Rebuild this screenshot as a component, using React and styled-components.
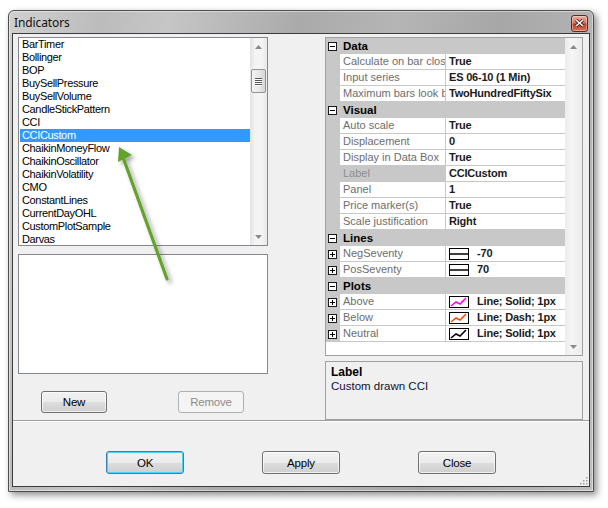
import styled, { createGlobalStyle, css } from 'styled-components';

const Global = createGlobalStyle`
  html, body { margin: 0; padding: 0; background: #fff; }
  body { font-family: "Liberation Sans", Arial, sans-serif; font-size: 11px; color: #000; }
  * { box-sizing: border-box; }
`;

const Page = styled.div`
  position: relative;
  width: 608px;
  height: 508px;
  padding: 10px 0 0 8px;
`;

const Frame = styled.div`
  width: 586px;
  border: 1px solid #4e4e4e;
  border-radius: 6px 6px 0 0;
  padding: 0 3px 4px 3px;
  background: linear-gradient(100deg, #d0d0d0 0%, #bcbcbc 14%, #c6c6c6 24%, #aaaaaa 44%, #b5b5b5 58%, #a7a7a7 74%, #bebebe 100%);
  box-shadow: 3px 3px 7px rgba(0, 0, 0, 0.45), inset 0 0 0 1px rgba(255, 255, 255, 0.45);
`;

const TitleBar = styled.div`
  height: 22px;
  display: flex;
  align-items: center;
  padding-left: 2px;
`;

const Title = styled.span`
  font-family: "Noto Sans", "Open Sans", sans-serif;
  font-size: 12px;
  color: #111;
  letter-spacing: -0.1px;
`;

const CloseBtn = styled.div`
  margin-left: auto;
  margin-right: 2px;
  width: 17px;
  height: 17px;
  margin-top: 2px;
  border: 1px solid #5c2a1f;
  border-radius: 3px;
  background: linear-gradient(#eab1a2 0%, #d9725a 45%, #c5391f 55%, #d7745c 100%);
  box-shadow: inset 0 0 0 1px rgba(255, 255, 255, 0.35);
  display: flex;
  align-items: center;
  justify-content: center;
`;

const Client = styled.div`
  height: 454px;
  border: 1px solid #3c3c3c;
  background: #f0f0f0;
  display: flex;
  flex-direction: column;
`;

const TopArea = styled.div`
  height: 387px;
  display: flex;
  gap: 57px;
  padding: 3px 6px 0 5px;
  border-bottom: 1px solid #a0a0a0;
  box-shadow: 0 1px 0 #fff;
`;

const LeftCol = styled.div`
  width: 250px;
  display: flex;
  flex-direction: column;
`;

const ListBox = styled.div`
  height: 209px;
  border: 1px solid #828790;
  background: #fff;
  display: flex;
`;

const ListItems = styled.div`
  flex: 1;
  padding-top: 0;
  overflow: hidden;
`;

const ListItem = styled.div`
  height: 13px;
  line-height: 13px;
  margin-left: 1px;
  padding-left: 2px;
  white-space: nowrap;
  letter-spacing: -0.35px;
  ${(p) => p.$selected && css`
    background: #3399ff;
    color: #fff;
  `}
`;

const ScrollBar = styled.div`
  width: 17px;
  background: linear-gradient(90deg, #e3e3e3, #f4f4f4 30%, #f4f4f4 70%, #e8e8e8);
  display: flex;
  flex-direction: column;
  align-items: center;
  position: relative;
`;

const ScrollArrow = styled.div`
  height: 17px;
  width: 17px;
  display: flex;
  align-items: center;
  justify-content: center;
`;

const Track = styled.div`
  flex: 1;
  width: 100%;
  display: flex;
  flex-direction: column;
  align-items: center;
`;

const Thumb = styled.div`
  margin-top: ${(p) => p.$offset}px;
  width: 15px;
  height: 24px;
  border: 1px solid #959595;
  border-radius: 2px;
  background: linear-gradient(90deg, #f3f3f3, #e8e8e8 50%, #d6d6d6);
  display: flex;
  flex-direction: column;
  align-items: center;
  justify-content: center;
  gap: 1px;
`;

const GripLine = styled.div`
  width: 7px;
  height: 1px;
  background: #555;
  box-shadow: 0 1px 0 #fff;
`;

const EmptyBox = styled.div`
  height: 120px;
  margin-top: 8px;
  border: 1px solid #828790;
  background: #fff;
`;

const ButtonRow = styled.div`
  margin-top: 17px;
  display: flex;
  justify-content: space-between;
  padding: 0 24px 0 23px;
`;

const Button = styled.div`
  width: ${(p) => (p.$wide ? 78 : 66)}px;
  height: ${(p) => (p.$wide ? 23 : 22)}px;
  border: 1px solid #707070;
  border-radius: 3px;
  background: linear-gradient(#f2f2f2 0%, #ebebeb 50%, #dddddd 51%, #cfcfcf 100%);
  box-shadow: inset 0 0 0 1px rgba(255, 255, 255, 0.7);
  display: flex;
  align-items: center;
  justify-content: center;
  font-size: 11.5px;
  color: #000;
  letter-spacing: -0.2px;
  ${(p) => p.$default && css`
    border-color: #3c7fb1;
    box-shadow: inset 0 0 0 1px #48d4f9;
    background: linear-gradient(#eaf6fd 0%, #d9f0fc 50%, #bee6fd 51%, #a7d9f5 100%);
    background: linear-gradient(#f2f2f2 0%, #ebebeb 50%, #dddddd 51%, #cfcfcf 100%);
  `}
  ${(p) => p.$disabled && css`
    border-color: #adb2b5;
    background: #f4f4f4;
    color: #8d8d8d;
    box-shadow: none;
  `}
`;

const RightCol = styled.div`
  width: 258px;
  display: flex;
  flex-direction: column;
  gap: 5px;
`;

const Grid = styled.div`
  height: 319px;
  border: 1px solid #a0a0a0;
  background: #fff;
  display: flex;
`;

const GridRows = styled.div`
  width: 239px;
  display: flex;
  flex-direction: column;
`;

const Row = styled.div`
  height: 16px;
  display: flex;
  border-bottom: 1px solid #c8c8c8;
`;

const CategoryRow = styled.div`
  height: 16px;
  display: flex;
  align-items: center;
  background: #c8c8c8;
  font-weight: bold;
  color: #000;
`;

const Margin = styled.div`
  width: 14px;
  height: 16px;
  flex-shrink: 0;
  background: #c8c8c8;
  display: flex;
  align-items: center;
  justify-content: center;
  padding-right: 1px;
`;

const Expander = styled.div`
  width: 9px;
  height: 9px;
  border: 1px solid #1a1a1a;
  background: #fff;
  position: relative;
  &::before {
    content: '';
    position: absolute;
    left: 1px;
    top: 3px;
    width: 5px;
    height: 1px;
    background: #000;
  }
  ${(p) => p.$plus && css`
    &::after {
      content: '';
      position: absolute;
      left: 3px;
      top: 1px;
      width: 1px;
      height: 5px;
      background: #000;
    }
  `}
`;

const CatLabel = styled.span`
  padding-left: 3px;
  font-size: 11.5px;
`;

const NameCell = styled.div`
  width: 106px;
  flex-shrink: 0;
  padding-left: 3px;
  line-height: 15px;
  white-space: nowrap;
  overflow: hidden;
  color: #6d6d6d;
  border-right: 1px solid #c8c8c8;
  ${(p) => p.$selected && css`
    background: #c8c8c8;
    color: #8e8e8e;
  `}
`;

const ValueCell = styled.div`
  flex: 1;
  padding-left: 3px;
  line-height: 15px;
  font-weight: bold;
  white-space: nowrap;
  overflow: hidden;
  color: #1b1b1b;
  display: flex;
  align-items: center;
  gap: 8px;
  letter-spacing: -0.2px;
`;

const GridScroll = styled.div`
  width: 17px;
  background: linear-gradient(90deg, #ececec, #f5f5f5 40%, #ececec);
  display: flex;
  flex-direction: column;
  justify-content: space-between;
`;

const DescBox = styled.div`
  flex: 1;
  border: 1px solid #a0a0a0;
  padding: 3px 5px;
`;

const DescTitle = styled.div`
  font-weight: bold;
  font-size: 12px;
  line-height: 14px;
`;

const DescText = styled.div`
  font-size: 11.5px;
  line-height: 14px;
  color: #101030;
`;

const BottomBar = styled.div`
  flex: 1;
  position: relative;
  display: flex;
  justify-content: center;
  align-items: flex-start;
  gap: 78px;
  padding-top: 30px;
`;

const SizeGrip = styled.svg`
  position: absolute;
  right: 1px;
  bottom: 1px;
`;

const Overlay = styled.svg`
  position: absolute;
  left: 0;
  top: 0;
  pointer-events: none;
`;

const indicators = [
  'BarTimer', 'Bollinger', 'BOP', 'BuySellPressure', 'BuySellVolume', 'CandleStickPattern',
  'CCI', 'CCICustom', 'ChaikinMoneyFlow', 'ChaikinOscillator', 'ChaikinVolatility', 'CMO',
  'ConstantLines', 'CurrentDayOHL', 'CustomPlotSample', 'Darvas',
];

const sections = [
  {
    name: 'Data',
    rows: [
      { name: 'Calculate on bar close', value: 'True' },
      { name: 'Input series', value: 'ES 06-10 (1 Min)' },
      { name: 'Maximum bars look back', value: 'TwoHundredFiftySix' },
    ],
  },
  {
    name: 'Visual',
    rows: [
      { name: 'Auto scale', value: 'True' },
      { name: 'Displacement', value: '0' },
      { name: 'Display in Data Box', value: 'True' },
      { name: 'Label', value: 'CCICustom', selected: true },
      { name: 'Panel', value: '1' },
      { name: 'Price marker(s)', value: 'True' },
      { name: 'Scale justification', value: 'Right' },
    ],
  },
  {
    name: 'Lines',
    rows: [
      { name: 'NegSeventy', value: '-70', swatch: 'line', expand: true },
      { name: 'PosSeventy', value: '70', swatch: 'line', expand: true },
    ],
  },
  {
    name: 'Plots',
    rows: [
      { name: 'Above', value: 'Line; Solid; 1px', swatch: '#ff00ff', expand: true },
      { name: 'Below', value: 'Line; Dash; 1px', swatch: '#ff4a00', expand: true },
      { name: 'Neutral', value: 'Line; Solid; 1px', swatch: '#000000', expand: true },
    ],
  },
];

function Arrow({ up }) {
  return (
    <svg width="7" height="4" viewBox="0 0 7 4">
      <path d={up ? 'M0 4 L3.5 0 L7 4 Z' : 'M0 0 L3.5 4 L7 0 Z'} fill="#8a8a8a" />
    </svg>
  );
}

function Swatch({ kind }) {
  return (
    <svg width="20" height="12" viewBox="0 0 20 12" style={{ flexShrink: 0 }}>
      <rect x="0.5" y="0.5" width="19" height="11" fill="#fff" stroke="#000" />
      {kind === 'line' ? (
        <line x1="1" y1="6" x2="19" y2="6" stroke="#000" strokeWidth="1.5" />
      ) : (
        <polyline points="2,10 7,6 11,8 17,2" fill="none" stroke={kind} strokeWidth="1.6" />
      )}
    </svg>
  );
}

export default function App() {
  return (
    <Page>
      <Global />
      <Frame>
        <TitleBar>
          <Title>Indicators</Title>
          <CloseBtn>
            <svg width="9" height="8" viewBox="0 0 9 8">
              <path d="M1 1 L8 7 M8 1 L1 7" stroke="#3a1a14" strokeWidth="3" />
              <path d="M1 1 L8 7 M8 1 L1 7" stroke="#fff" strokeWidth="1.6" />
            </svg>
          </CloseBtn>
        </TitleBar>
        <Client>
          <TopArea>
            <LeftCol>
              <ListBox>
                <ListItems>
                  {indicators.map((n) => (
                    <ListItem key={n} $selected={n === 'CCICustom'}>{n}</ListItem>
                  ))}
                </ListItems>
                <ScrollBar>
                  <ScrollArrow><Arrow up /></ScrollArrow>
                  <Track>
                    <Thumb $offset={14}>
                      <GripLine />
                      <GripLine />
                      <GripLine />
                      <GripLine />
                    </Thumb>
                  </Track>
                  <ScrollArrow><Arrow /></ScrollArrow>
                </ScrollBar>
              </ListBox>
              <EmptyBox />
              <ButtonRow>
                <Button>New</Button>
                <Button $disabled>Remove</Button>
              </ButtonRow>
            </LeftCol>
            <RightCol>
              <Grid>
                <GridRows>
                  {sections.map((s) => (
                    <div key={s.name}>
                      <CategoryRow>
                        <Margin><Expander /></Margin>
                        <CatLabel>{s.name}</CatLabel>
                      </CategoryRow>
                      {s.rows.map((r) => (
                        <Row key={r.name}>
                          <Margin>{r.expand && <Expander $plus />}</Margin>
                          <NameCell $selected={r.selected}>{r.name}</NameCell>
                          <ValueCell>
                            {r.swatch && <Swatch kind={r.swatch} />}
                            {r.value}
                          </ValueCell>
                        </Row>
                      ))}
                    </div>
                  ))}
                </GridRows>
                <GridScroll>
                  <ScrollArrow><Arrow up /></ScrollArrow>
                  <ScrollArrow><Arrow /></ScrollArrow>
                </GridScroll>
              </Grid>
              <DescBox>
                <DescTitle>Label</DescTitle>
                <DescText>Custom drawn CCI</DescText>
              </DescBox>
            </RightCol>
          </TopArea>
          <BottomBar>
            <Button $wide $default>OK</Button>
            <Button $wide>Apply</Button>
            <Button $wide>Close</Button>
            <SizeGrip width="10" height="10" viewBox="0 0 10 10">
              {[[8, 2], [8, 5], [5, 5], [8, 8], [5, 8], [2, 8]].map(([x, y]) => (
                <rect key={`${x}-${y}`} x={x} y={y} width="1.5" height="1.5" fill="#a0a0a0" />
              ))}
            </SizeGrip>
          </BottomBar>
        </Client>
      </Frame>
      <Overlay width="608" height="508" viewBox="0 0 608 508">
        <defs>
          <filter id="arrowShadow" x="-50%" y="-50%" width="200%" height="200%">
            <feDropShadow dx="3" dy="3" stdDeviation="2" floodColor="#000" floodOpacity="0.35" />
          </filter>
        </defs>
        <g filter="url(#arrowShadow)">
          <line x1="167" y1="279" x2="124" y2="160" stroke="#64a32c" strokeWidth="3.2" strokeLinecap="round" />
          <polygon points="119,147 132,155 118,162" fill="#64a32c" />
        </g>
      </Overlay>
    </Page>
  );
}
